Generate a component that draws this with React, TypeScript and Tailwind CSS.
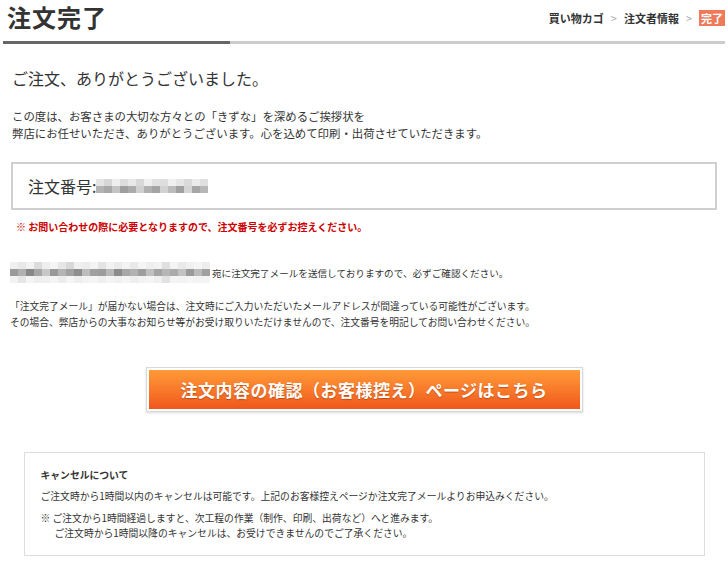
import React from 'react';

// mosaic shades used for blurred personal info
const orderShades = [
  ['bg-[#e4e4e4]', 'bg-[#d6d6d6]', 'bg-[#eeeeee]', 'bg-[#dcdcdc]', 'bg-[#e8e8e8]', 'bg-[#d8d8d8]', 'bg-[#efefef]', 'bg-[#e2e2e2]', 'bg-[#dddddd]', 'bg-[#f0f0f0]', 'bg-[#e6e6e6]', 'bg-[#dadada]', 'bg-[#ebebeb]', 'bg-[#e0e0e0]'],
  ['bg-[#b4b4b4]', 'bg-[#a8a8a8]', 'bg-[#c4c4c4]', 'bg-[#9e9e9e]', 'bg-[#acacac]', 'bg-[#d0d0d0]', 'bg-[#b0b0b0]', 'bg-[#a4a4a4]', 'bg-[#d2d2d2]', 'bg-[#bcbcbc]', 'bg-[#a0a0a0]', 'bg-[#d4d4d4]', 'bg-[#a6a6a6]', 'bg-[#b8b8b8]'],
];

const mailShades = [
  ['bg-[#f0f0f0]', 'bg-[#e8e8e8]', 'bg-[#f2f2f2]', 'bg-[#dcdcdc]', 'bg-[#eeeeee]', 'bg-[#f4f4f4]', 'bg-[#e6e6e6]', 'bg-[#d8d8d8]', 'bg-[#f0f0f0]', 'bg-[#ececec]', 'bg-[#f4f4f4]', 'bg-[#e4e4e4]', 'bg-[#f2f2f2]', 'bg-[#ebebeb]', 'bg-[#f3f3f3]', 'bg-[#e9e9e9]', 'bg-[#f5f5f5]', 'bg-[#eeeeee]', 'bg-[#f2f2f2]', 'bg-[#e0e0e0]', 'bg-[#f4f4f4]', 'bg-[#eaeaea]', 'bg-[#f0f0f0]', 'bg-[#f4f4f4]', 'bg-[#ededed]'],
  ['bg-[#9a9a9a]', 'bg-[#b0b0b0]', 'bg-[#888888]', 'bg-[#a6a6a6]', 'bg-[#c8c8c8]', 'bg-[#999999]', 'bg-[#b4b4b4]', 'bg-[#a2a2a2]', 'bg-[#8e8e8e]', 'bg-[#bcbcbc]', 'bg-[#a0a0a0]', 'bg-[#9c9c9c]', 'bg-[#b8b8b8]', 'bg-[#8c8c8c]', 'bg-[#a8a8a8]', 'bg-[#b2b2b2]', 'bg-[#9e9e9e]', 'bg-[#c0c0c0]', 'bg-[#a4a4a4]', 'bg-[#b6b6b6]', 'bg-[#aaaaaa]', 'bg-[#c2c2c2]', 'bg-[#9a9a9a]', 'bg-[#bababa]', 'bg-[#a0a0a0]'],
  ['bg-[#f2f2f2]', 'bg-[#e6e6e6]', 'bg-[#f4f4f4]', 'bg-[#eeeeee]', 'bg-[#f0f0f0]', 'bg-[#f4f4f4]', 'bg-[#ececec]', 'bg-[#f5f5f5]', 'bg-[#eeeeee]', 'bg-[#f3f3f3]', 'bg-[#f5f5f5]', 'bg-[#efefef]', 'bg-[#f4f4f4]', 'bg-[#f1f1f1]', 'bg-[#f5f5f5]', 'bg-[#eeeeee]', 'bg-[#f3f3f3]', 'bg-[#f5f5f5]', 'bg-[#f0f0f0]', 'bg-[#e2e2e2]', 'bg-[#f4f4f4]', 'bg-[#f2f2f2]', 'bg-[#f5f5f5]', 'bg-[#f3f3f3]', 'bg-[#f4f4f4]'],
];

const Mosaic: React.FC<{ rows: string[][]; cell: string }> = ({ rows, cell }) => (
  <div className="flex flex-col">
    {rows.map((row, i) => (
      <div key={i} className="flex">
        {row.map((c, j) => (
          <div key={j} className={`${cell} ${c}`} />
        ))}
      </div>
    ))}
  </div>
);

const App: React.FC = () => {
  return (
    <div className="w-[728px] min-h-[564px] bg-white text-[#333] font-['Noto_Sans_CJK_JP','Noto_Sans',sans-serif]">
      {/* header */}
      <div className="h-[41px] flex items-start justify-between">
        <h1 className="pl-[7px] pt-[2px] text-[24px] leading-[30px] font-bold tracking-[1px] text-[#333]">注文完了</h1>
        <div className="pt-[10px] pr-[3px] flex items-center text-[11px] leading-[14px] font-bold">
          <span>買い物カゴ</span>
          <span className="mx-[7px] text-[#aaa] font-normal">&gt;</span>
          <span>注文者情報</span>
          <span className="mx-[7px] text-[#aaa] font-normal">&gt;</span>
          <span className="bg-[#ef7a5a] text-white px-[2px] py-[1px]">完了</span>
        </div>
      </div>
      <div className="flex h-[3px] mx-[3px]">
        <div className="w-[227px] bg-[#666]" />
        <div className="flex-1 bg-[#ccc]" />
      </div>

      <div className="px-[11px]">
        <h2 className="mt-[24px] pl-[1px] text-[16px] leading-[20px] text-[#333]">ご注文、ありがとうございました。</h2>
        <p className="mt-[20px] pl-[1px] text-[11.4px] leading-[17px]">
          この度は、お客さまの大切な方々との「きずな」を深めるご挨拶状を
          <br />
          弊店にお任せいただき、ありがとうございます。心を込めて印刷・出荷させていただきます。
        </p>

        {/* order number */}
        <div className="mt-[20px] w-[706px] h-[48px] border-2 border-[#cfcfcf] flex items-center pl-[15px]">
          <span className="text-[16px] leading-[20px]">注文番号:</span>
          <Mosaic rows={orderShades} cell="w-[8px] h-[7px]" />
        </div>
        <p className="mt-[10px] pl-[5px] text-[10px] leading-[14px] font-bold text-[#cc0000]">
          ※ お問い合わせの際に必要となりますので、注文番号を必ずお控えください。
        </p>

        {/* mail */}
        <div className="mt-[28px] -ml-[1px] flex items-center">
          <Mosaic rows={mailShades} cell="w-[8px] h-[7px]" />
          <span className="ml-[2px] text-[9.6px] leading-[14px]">宛に注文完了メールを送信しておりますので、必ずご確認ください。</span>
        </div>
        <p className="mt-[15px] -ml-[1px] text-[9.75px] leading-[16px]">
          「注文完了メール」が届かない場合は、注文時にご入力いただいたメールアドレスが間違っている可能性がございます。
          <br />
          その場合、弊店からの大事なお知らせ等がお受け取りいただけませんので、注文番号を明記してお問い合わせください。
        </p>
      </div>

      {/* confirm button */}
      <div className="mt-[37px] flex justify-center">
        <button
          type="button"
          className="w-[437px] h-[45px] border border-[#d9d9d9] p-[2px] bg-white shadow-[0_1px_2px_rgba(0,0,0,0.15)]"
        >
          <span className="flex h-full w-full items-center justify-center bg-linear-to-b from-[#ff9a38] to-[#f0561c] text-white text-[17px] font-bold tracking-[0.5px] [text-shadow:0_1px_1px_rgba(120,40,0,0.45)]">
            注文内容の確認（お客様控え）ページはこちら
          </span>
        </button>
      </div>

      {/* cancel */}
      <div className="mt-[40px] mx-auto w-[681px] border border-[#ddd] pt-[15px] pb-[14px] px-[16px] text-[9.8px]">
        <p className="font-bold leading-[14px] text-[#333]">キャンセルについて</p>
        <p className="mt-[7px] leading-[14px]">
          ご注文時から1時間以内のキャンセルは可能です。上記のお客様控えページか注文完了メールよりお申込みください。
        </p>
        <p className="mt-[8px] leading-[15px]">
          ※ ご注文から1時間経過しますと、次工程の作業（制作、印刷、出荷など）へと進みます。
          <br />
          <span className="pl-[14px]">ご注文時から1時間以降のキャンセルは、お受けできませんのでご了承ください。</span>
        </p>
      </div>
    </div>
  );
};

export default App;
